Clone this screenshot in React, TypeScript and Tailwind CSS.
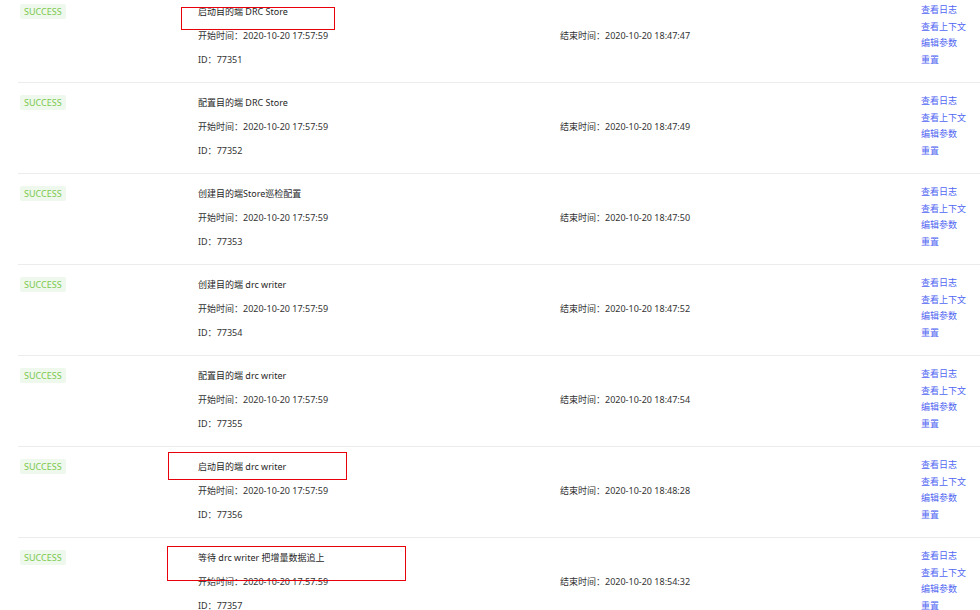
import React from "react";

const rows = [
  { title: "启动目的端 DRC Store", id: "77351", end: "2020-10-20 18:47:47" },
  { title: "配置目的端 DRC Store", id: "77352", end: "2020-10-20 18:47:49" },
  { title: "创建目的端Store巡检配置", id: "77353", end: "2020-10-20 18:47:50" },
  { title: "创建目的端 drc writer", id: "77354", end: "2020-10-20 18:47:52" },
  { title: "配置目的端 drc writer", id: "77355", end: "2020-10-20 18:47:54" },
  { title: "启动目的端 drc writer", id: "77356", end: "2020-10-20 18:48:28" },
  { title: "等待 drc writer 把增量数据追上", id: "77357", end: "2020-10-20 18:54:32" },
];

const font = { fontFamily: '"Noto Sans", "Noto Sans CJK SC", sans-serif' };

export default function App() {
  return (
    <div
      className="relative w-[980px] h-[610px] overflow-hidden bg-white text-[9px] text-[#333]"
      style={font}
    >
      <div className="-mt-[8px] pl-[18px]">
        {rows.map((r) => (
          <div key={r.id} className="flex h-[91px] border-b border-[#ececec]">
            <div className="w-[180px] pl-[2px] pt-[12px]">
              <span className="inline-flex h-[15px] items-center rounded-[2px] bg-[#eef8ec] px-[4px] text-[#7cc84c]">
                SUCCESS
              </span>
            </div>
            <div className="w-[362px] pt-[8px] leading-[24px]">
              <div className="text-[#1f1f1f]">{r.title}</div>
              <div>开始时间：2020-10-20 17:57:59</div>
              <div>ID：{r.id}</div>
            </div>
            <div className="w-[361px] pt-[32px] leading-[24px]">
              <div>结束时间：{r.end}</div>
            </div>
            <div className="flex-1 pt-[10px] leading-[16.7px] text-[#4f66f2]">
              <div>查看日志</div>
              <div>查看上下文</div>
              <div>编辑参数</div>
              <div>重置</div>
            </div>
          </div>
        ))}
      </div>
      <div className="absolute left-[181px] top-[7px] h-[23px] w-[154px] border border-[#e8000b]" />
      <div className="absolute left-[168px] top-[452px] h-[28px] w-[179px] border border-[#e8000b]" />
      <div className="absolute left-[167px] top-[546px] h-[35px] w-[239px] border border-[#e8000b]" />
    </div>
  );
}
